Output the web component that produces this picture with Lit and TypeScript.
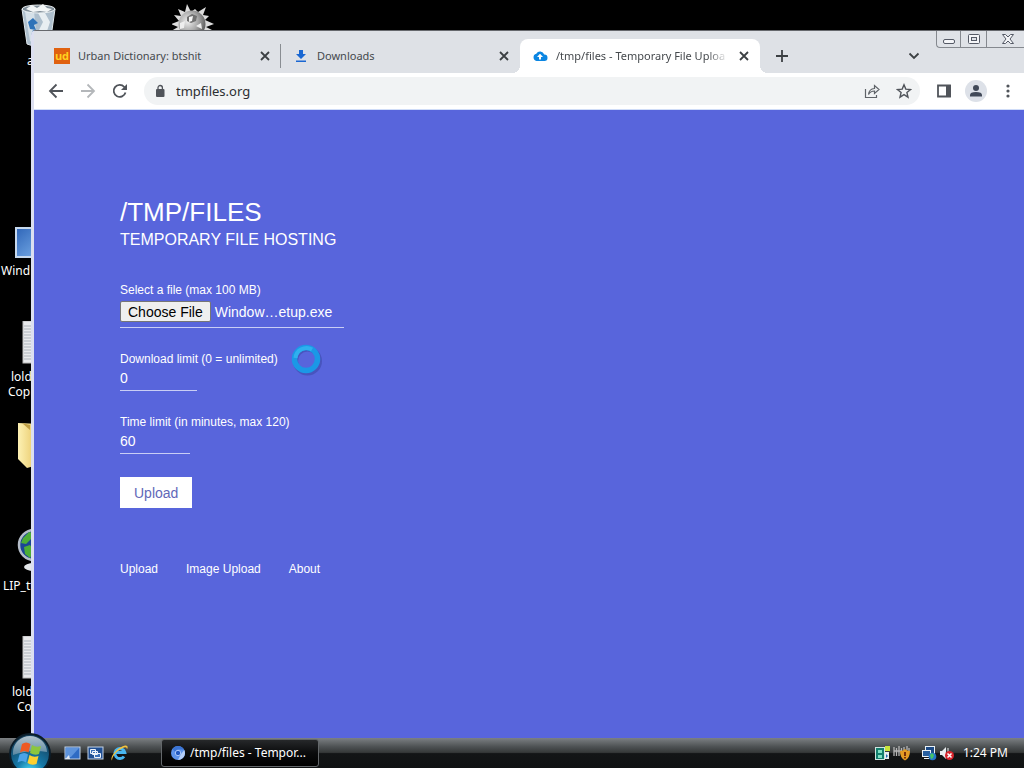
import { LitElement, html, css, svg } from "lit";
import { customElement } from "lit/decorators.js";

const page = svg`
  <rect x="5" y="0" width="26" height="42" fill="#e9eaec" stroke="#bbb"/>
  ${[5, 8, 11, 14, 17, 20, 23, 26, 29, 32, 35, 38].map((y) => svg`<path d="M6 ${y}h22" stroke="#aeb4bb"/>`)}
`;

const art: Record<string, unknown> = {
  bin: html`<svg width="36" height="44" viewBox="0 0 36 44">
    <path d="M1 5 6 40q12 5 23 0l5-35Z" fill="#aebfcd" stroke="#dfe7ec"/>
    <path d="M4 8 9 37q4 3 7 2L13 7Z" fill="#d5e0e8"/>
    <path d="m17 9 5 9-4 8 7 4 4-12-5-9Z" fill="#e8eef2"/>
    <path d="m7 18 5-4 5 5-4 2 2 5-6-1Zm3 13 2-5 5 3-2 5Z" fill="#2f73b8"/>
    <ellipse cx="17.500" cy="5" rx="16.500" ry="4" fill="#7f8d98" stroke="#eef3f5"/>
    <path d="m5 5 6-4 5 3 6-4 4 4 5 1-5 3-7-1-7 1Z" fill="#f3f6f7"/>
  </svg>`,
  mine: html`<svg width="42" height="42" viewBox="0 0 42 42">
    <defs><radialGradient id="mi" cx=".35" cy=".4" r=".75"><stop stop-color="#f0f0f0"/><stop offset=".5" stop-color="#a8a8a8"/><stop offset="1" stop-color="#4a4a4a"/></radialGradient></defs>
    <path d="m15 0 4 8 4-3 3 3 8-5-3 8 6 1-4 4 9 4-8 3 8 4-8 2 4 8-9-3-2 8-6-6-6 6-3-8-8 3 3-8-8-2 7-4-7-3 8-3-5-6 7 1-3-7 7 3Z" fill="#dcdcdc"/>
    <circle cx="20" cy="20" r="13.500" fill="url(#mi)"/>
    <path d="m15 13 5-3 5 2-1 5-5 2-4-2Z" fill="#707070"/><path d="m17 13 4-1-1 5-3 1Z" fill="#f4f4f4"/>
    <path d="m8 19 5-2-1 7-4 1Zm16 3 5-3 1 6Z" fill="#eee"/>
  </svg>`,
  screen: html`<svg width="34" height="32" viewBox="0 0 34 32">
    <defs><linearGradient id="sc" x2="1" y2="1"><stop stop-color="#2e65b8"/><stop offset="1" stop-color="#82b6ee"/></linearGradient></defs>
    <rect x="1" y="1" width="32" height="29" fill="url(#sc)" stroke="#c7d9ee" stroke-width="2"/>
  </svg>`,
  doc: html`<svg width="34" height="44" viewBox="0 0 34 44">${page}</svg>`,
  folder: html`<svg width="34" height="48" viewBox="0 0 34 48">
    <defs><linearGradient id="fo" x2="1"><stop stop-color="#fdf1b4"/><stop offset="1" stop-color="#e3be55"/></linearGradient></defs>
    <path d="M1 1 24 2v40L10 46 1 37Z" fill="url(#fo)"/><path d="m5 1 8 7V3Z" fill="#bf9f45"/>
  </svg>`,
  globe: html`<svg width="38" height="46" viewBox="0 0 38 46">
    <circle cx="19" cy="17" r="15" fill="#1b4596" stroke="#b5bdc8" stroke-width="2.500"/>
    <path d="m8 10 6-6 5 1-3 6-5 5-5-1Zm1 9 6-2 4 6-4 7-5-4Z" fill="#4cad37"/>
    <ellipse cx="19" cy="39" rx="10" ry="4" fill="#e4e7ea"/>
  </svg>`,
  ud: html`<svg width="16" height="16" viewBox="0 0 16 16"><rect width="16" height="16" fill="#e0610f"/>
    <text x="8" y="12" text-anchor="middle" font-family="Open Sans, sans-serif" font-weight="700" font-size="11" fill="#ffd21f">ud</text></svg>`,
  download: html`<svg width="16" height="16" viewBox="0 0 16 16"><path d="M6 2h4v4h3l-5 5-5-5h3ZM3 12.500h10v1.500H3Z" fill="#1a67d2"/></svg>`,
  cloud: html`<svg width="16" height="16" viewBox="0 0 16 16">
    <path d="M12.200 6.600A4.300 4.300 0 0 0 4.300 5.800 3.700 3.700 0 0 0 4.500 13h7.900a3.200 3.200 0 0 0-.2-6.400Z" fill="#0b86e2"/>
    <path d="M8 5.800 5 9h2v2.500h2V9h2Z" fill="#fff"/></svg>`,
  close: html`<svg width="16" height="16" viewBox="0 0 16 16"><path d="m4 4 8 8m0-8-8 8" stroke="#3c4043" stroke-width="1.800"/></svg>`,
  plus: html`<svg width="16" height="16" viewBox="0 0 16 16"><path d="M8 2v12M2 8h12" stroke="#3c4043" stroke-width="1.800"/></svg>`,
  chevron: html`<svg width="16" height="16" viewBox="0 0 16 16"><path d="m3.500 5.500 4.500 4.500 4.500-4.500" fill="none" stroke="#3c4043" stroke-width="1.800"/></svg>`,
  back: html`<svg width="16" height="16" viewBox="0 0 16 16"><path d="M15 8H2m6.500-6.500L2 8l6.500 6.500" fill="none" stroke="#50545a" stroke-width="1.800"/></svg>`,
  forward: html`<svg width="16" height="16" viewBox="0 0 16 16"><path d="M1 8h13M7.500 1.500 14 8l-6.500 6.500" fill="none" stroke="#b4b7ba" stroke-width="1.800"/></svg>`,
  reload: html`<svg width="16" height="16" viewBox="0 0 16 16"><path d="M13.500 9.500A6 6 0 1 1 12.300 4l1.200 1.300" fill="none" stroke="#50545a" stroke-width="1.800"/><path d="M15 1v6H9Z" fill="#50545a"/></svg>`,
  lock: html`<svg width="16" height="16" viewBox="0 0 16 16"><rect x="4" y="6" width="8.500" height="8" rx="1" fill="#50545a"/><path d="M6 6.500V4.700a2.200 2.200 0 0 1 4.400 0v1.800" fill="none" stroke="#50545a" stroke-width="1.300"/></svg>`,
  share: html`<svg width="16" height="16" viewBox="0 0 16 16"><path d="M1.500 6v8.500h11V12M4.500 11.500q.5-5.500 6-6V2.500L15 6.500l-4.500 4V8q-4 0-6 3.500Z" fill="none" stroke="#5f6368" stroke-width="1.200"/></svg>`,
  star: html`<svg width="16" height="16" viewBox="0 0 16 16"><path d="m8 1.800 1.800 4.300 4.700.4-3.600 3 1.100 4.700-4-2.500-4 2.500 1.100-4.700-3.600-3 4.700-.4Z" fill="none" stroke="#50545a" stroke-width="1.400"/></svg>`,
  panel: html`<svg width="16" height="16" viewBox="0 0 16 16"><path d="M2 2.500h12v11H2Z" fill="none" stroke="#50545a" stroke-width="1.800"/><path d="M10 2h5v12h-5Z" fill="#50545a"/></svg>`,
  person: html`<svg width="22" height="22" viewBox="0 0 22 22"><circle cx="11" cy="11" r="11" fill="#dde1e8"/><circle cx="11" cy="8" r="3" fill="#414958"/><path d="M5 16.500v-1.600q0-3 6-3t6 3v1.600Z" fill="#414958"/></svg>`,
  dots: html`<svg width="16" height="16" viewBox="0 0 16 16" fill="#50545a"><circle cx="8" cy="3" r="1.600"/><circle cx="8" cy="8" r="1.600"/><circle cx="8" cy="13" r="1.600"/></svg>`,
  minimize: html`<svg width="14" height="14" viewBox="0 0 14 14"><rect x="1.500" y="7.500" width="11" height="4" rx="1.500" fill="#f4f5f8" stroke="#555a66"/></svg>`,
  maximize: html`<svg width="14" height="14" viewBox="0 0 14 14"><rect x="1.500" y="2.500" width="11" height="9" rx="1" fill="#f4f5f8" stroke="#555a66"/><rect x="4.500" y="5.500" width="5" height="3" fill="#dfe2e8" stroke="#555a66"/></svg>`,
  shut: html`<svg width="14" height="14" viewBox="0 0 14 14"><path d="M1.500 2.500h3L7 5l2.500-2.500h3L9 7l3.500 4.500h-3L7 9l-2.500 2.500h-3L5 7Z" fill="#f4f5f8" stroke="#555a66"/></svg>`,
  start: html`<svg width="42" height="42" viewBox="0 0 42 42">
    <defs>
      <radialGradient id="st" cx=".5" cy=".95" r=".85"><stop stop-color="#4be0fb"/><stop offset=".4" stop-color="#1579a8"/><stop offset="1" stop-color="#15405c"/></radialGradient>
      <linearGradient id="gl" x2="0" y2="1"><stop stop-color="#e6eef3"/><stop offset="1" stop-color="#6f95ab"/></linearGradient>
    </defs>
    <circle cx="21" cy="21" r="20" fill="url(#st)" stroke="#0c1d29" stroke-width="2"/>
    <path d="M4 19a17 16 0 0 1 34 0q-17-3-34 3Z" fill="url(#gl)" opacity=".75"/>
    <path d="M13 11q4-3 8.500 0l-2 8.500q-4-3-8.500 0Z" fill="#ee5a24"/><path d="M23 12q4 3 9 1l-2 8q-4 2-9-1Z" fill="#8cc63e"/>
    <path d="M10.500 21.500q5-3 8.500 0l-2 8q-4-3-8.500 0Z" fill="#4ba3e8"/><path d="M20.500 22q4 3 9 1l-2 8q-5 2-9-1Z" fill="#fdd02f"/>
  </svg>`,
  desktop: html`<svg width="17" height="16" viewBox="0 0 17 16"><rect x="1" y="2" width="15" height="12" fill="#2f6bc4" stroke="#c4d3e6"/><path d="M2 3h13L7 12H2Z" fill="#5d93dc"/><path d="m1 14 4-4 1 4Z" fill="#dfe8f3"/></svg>`,
  switcher: html`<svg width="17" height="16" viewBox="0 0 17 16"><rect x="1" y="2" width="15" height="12" fill="#204f93" stroke="#c4d3e6"/><path d="M3.500 4.500h5v4h-5Zm2 2h5v3h-5Zm2 2h6v4h-6Z" fill="#3a6fb8" stroke="#eef3fa"/></svg>`,
  explorer: html`<svg width="19" height="18" viewBox="0 0 19 18"><path d="M14 12.500a5 5 0 1 1 .8-4H5" fill="none" stroke="#48b7f2" stroke-width="3"/><path d="M2 16.500C-1 13 8 3 15 1.500q4-.6 2 4 0-3-3-2C8 5.500 2 12 2 16.500Z" fill="#f5c33b"/></svg>`,
  chromium: html`<svg width="14" height="14" viewBox="0 0 14 14"><circle cx="7" cy="7" r="7" fill="#5d93ea"/><path d="M7 0a7 7 0 0 1 6 3.500H7A3.500 3.500 0 0 0 4 6L1.500 3A7 7 0 0 1 7 0Z" fill="#3b74d4"/><path d="M13.300 4A7 7 0 0 1 7 14l3-6Z" fill="#b5cff9"/><circle cx="7" cy="7" r="2.700" fill="#2259bf" stroke="#a9c6f7"/></svg>`,
  tray1: html`<svg width="16" height="16" viewBox="0 0 16 16"><rect x=".5" y="2.500" width="9" height="12" fill="#137f6d" stroke="#cfe5e0"/><path d="M3 5h4v3H3Zm0 5h4v3H3Z" fill="#7fe0c3"/><path d="M10 1h5v5h-5Z" fill="#c8e53a"/><path d="M10 7h4v7h-4Z" fill="#e6eef0"/><path d="m11 9 2 2-2 2Z" fill="#276eb4"/></svg>`,
  tray2: html`<svg width="18" height="16" viewBox="0 0 18 16"><path d="M1 2v9M3.500 3v8M6 1v10M8.500 3v6M11 2v3M14 1v4M16 3v3M1 6h7" stroke="#b5b5b5" stroke-width="1.300"/><path d="M12 4q2 2 5 2 0 7-5 9.500Q7 13 7 6q3 0 5-2Z" fill="#e69b24"/><path d="M12 7v4m0 1v1.500" stroke="#6d2408" stroke-width="1.800"/></svg>`,
  network: html`<svg width="16" height="16" viewBox="0 0 16 16"><rect x="4.500" y="1.500" width="9" height="7" fill="#1c4a86" stroke="#eaf1f6"/><rect x="1.500" y="5.500" width="8" height="6" fill="#275f9f" stroke="#eaf1f6"/><path d="M3 13.500h5" stroke="#eaf1f6"/><circle cx="11.500" cy="11.500" r="3.800" fill="#2478c9"/><path d="m9 10 2-2 2 2-1 3-2 1Z" fill="#45c466"/></svg>`,
  volume: html`<svg width="16" height="16" viewBox="0 0 16 16"><path d="M1 6h2l4-4v12l-4-4H1Z" fill="#e9edef"/><path d="M9 3v4" stroke="#e9edef"/><circle cx="10.500" cy="10.500" r="4.500" fill="#d8242c"/><path d="m8.500 8.500 4 4m0-4-4 4" stroke="#fff" stroke-width="1.500"/></svg>`,
};

@customElement("desktop-icons")
class DesktopIcons extends LitElement {
  static styles = css`
    :host { display: block; }
    .art, .label { position: absolute; }
    .label { color: #fff; font: 12px/15px "Noto Sans", sans-serif; white-space: nowrap; }
    svg { display: block; }
  `;
  icons = [
    { x: 21, y: 4, art: "bin" },
    { x: 172, y: 4, art: "mine" },
    { x: 15, y: 227, art: "screen" },
    { x: 18, y: 321, art: "doc" },
    { x: 17, y: 422, art: "folder" },
    { x: 15, y: 528, art: "globe" },
    { x: 18, y: 636, art: "doc" },
  ];
  labels = [
    { x: 27, y: 53, text: "a" },
    { x: 1, y: 263, text: "Wind" },
    { x: 11, y: 369, text: "lold" },
    { x: 8, y: 384, text: "Cop" },
    { x: 3, y: 578, text: "LIP_tt" },
    { x: 12, y: 684, text: "lold" },
    { x: 17, y: 699, text: "Co" },
  ];
  render() {
    return html`
      ${this.icons.map((i) => html`<div class="art" style="left:${i.x}px;top:${i.y}px">${art[i.art]}</div>`)}
      ${this.labels.map((l) => html`<span class="label" style="left:${l.x}px;top:${l.y}px">${l.text}</span>`)}`;
  }
}

@customElement("browser-tabs")
class BrowserTabs extends LitElement {
  static styles = css`
    :host { display: flex; align-items: stretch; height: 42px; padding: 8px 8px 0; box-sizing: border-box; background: #dee1e6; color: #45494d; font: 11px/16px "Noto Sans", sans-serif; }
    .tab { position: relative; display: flex; align-items: center; gap: 8px; flex: 0 1 239px; box-sizing: border-box; padding: 0 8px 0 12px; min-width: 0; }
    .tab.divided { border-right: 1px solid #898d92; border-image: linear-gradient(transparent 18%, #898d92 18% 82%, transparent 82%) 1; padding-right: 7px; }
    .tab.active { flex-basis: 240px; background: #fff; border-radius: 8px 8px 0 0; }
    .tab.active::before, .tab.active::after { content: ""; position: absolute; bottom: 0; width: 8px; height: 8px; }
    .tab.active::before { left: -8px; background: radial-gradient(circle at 0 0, transparent 8px, #fff 8px); }
    .tab.active::after { right: -8px; background: radial-gradient(circle at 100% 0, transparent 8px, #fff 8px); }
    .title { flex: 1; overflow: hidden; white-space: nowrap; }
    .tab.active .title { mask-image: linear-gradient(90deg, #000 88%, transparent); }
    button { display: grid; place-items: center; padding: 0; border: 0; background: none; }
    .add { margin-left: 14px; }
    .search { margin: 0 94px 0 auto; }
    svg { display: block; flex: none; }
  `;
  tabs = [
    { art: "ud", title: "Urban Dictionary: btshit", cls: "divided" },
    { art: "download", title: "Downloads", cls: "" },
    { art: "cloud", title: "/tmp/files - Temporary File Uploa", cls: "active" },
  ];
  render() {
    return html`${this.tabs.map((t) => html`<div class="tab ${t.cls}">${art[t.art]}<span class="title">${t.title}</span><button aria-label="Close tab">${art.close}</button></div>`)}
      <button class="add" aria-label="New tab">${art.plus}</button>
      <button class="search" aria-label="Search tabs">${art.chevron}</button>`;
  }
}

@customElement("browser-toolbar")
class BrowserToolbar extends LitElement {
  static styles = css`
    :host { display: flex; align-items: center; height: 37px; padding-left: 6px; box-sizing: border-box; background: #fff; border-bottom: 1px solid #cfdcf8; }
    button { display: grid; place-items: center; width: 32px; height: 28px; padding: 0; border: 0; background: none; flex: none; }
    .address { display: flex; align-items: center; flex: 1; height: 28px; margin: 0 8px; padding-left: 8px; border-radius: 14px; background: #f1f3f4; }
    input { flex: 1; min-width: 0; margin-left: 8px; padding: 0; border: 0; outline: 0; background: none; color: #2b2e31; font: 13px/20px "Noto Sans", sans-serif; }
    svg { display: block; flex: none; }
  `;
  render() {
    return html`
      <button aria-label="Back">${art.back}</button>
      <button aria-label="Forward">${art.forward}</button>
      <button aria-label="Reload">${art.reload}</button>
      <div class="address">${art.lock}<input aria-label="Address" value="tmpfiles.org" />
        <button aria-label="Share">${art.share}</button><button aria-label="Bookmark">${art.star}</button></div>
      <button aria-label="Side panel">${art.panel}</button>
      <button aria-label="Profile">${art.person}</button>
      <button aria-label="Menu">${art.dots}</button>`;
  }
}

@customElement("upload-page")
class UploadPage extends LitElement {
  static styles = css`
    :host { display: block; padding: 86px; background: #5865dc; color: #fff; font: 12px/16px "Liberation Sans", Arial, sans-serif; box-sizing: border-box; }
    h1 { margin: 0; font-size: 26px; line-height: 32px; font-weight: 400; }
    h2 { margin: 0 0 30px; font-size: 16px; line-height: 24px; font-weight: 400; }
    form { display: flex; flex-direction: column; align-items: flex-start; gap: 23px; }
    .field { display: flex; flex-direction: column; align-items: flex-start; }
    input { box-sizing: border-box; margin: 0; padding: 3px 0 4px; border: 0; border-bottom: 1px solid #c9cef5; border-radius: 0; outline: 0; background: none; color: #fff; font: 14px/16px "Liberation Sans", Arial, sans-serif; }
    input[type="number"] { appearance: textfield; height: 24px; }
    .file { width: 224px; height: 30px; padding-bottom: 5px; }
    .file::file-selector-button { box-sizing: border-box; height: 21px; margin: 0 4px 0 0; padding: 0 7px; border: 1px solid #767676; border-radius: 2px; background: #efefef; color: #000; font: inherit; }
    .downloads { width: 77px; }
    .minutes { width: 70px; }
    .submit { height: 31px; margin: 0; padding: 0 14px; border: 0; background: #fff; color: #6268b8; font: 14px/16px "Liberation Sans", Arial, sans-serif; }
    nav { display: flex; gap: 28px; margin-top: 53px; }
    a { color: #fff; text-decoration: none; }
  `;
  firstUpdated() {
    const picked = new DataTransfer();
    picked.items.add(new File([""], "Window…etup.exe"));
    this.renderRoot.querySelector<HTMLInputElement>(".file")!.files = picked.files;
  }
  render() {
    return html`
      <h1>/TMP/FILES</h1>
      <h2>TEMPORARY FILE HOSTING</h2>
      <form>
        <div class="field"><label for="file">Select a file (max 100 MB)</label><input class="file" id="file" type="file" /></div>
        <div class="field"><label for="downloads">Download limit (0 = unlimited)</label><input class="downloads" id="downloads" type="number" value="0" /></div>
        <div class="field"><label for="minutes">Time limit (in minutes, max 120)</label><input class="minutes" id="minutes" type="number" value="60" /></div>
        <button class="submit" type="button">Upload</button>
      </form>
      <nav><a href="#upload">Upload</a><a href="#image">Image Upload</a><a href="#about">About</a></nav>`;
  }
}

@customElement("task-bar")
class TaskBar extends LitElement {
  static styles = css`
    :host { position: relative; display: flex; align-items: center; height: 30px; padding: 0 16px 0 64px; box-sizing: border-box; background: linear-gradient(#7c8083, #4c5052 30%, #363939 48%, #131516 52%, #101213); color: #fff; font: 12px/16px "Noto Sans", sans-serif; }
    button { display: flex; align-items: center; padding: 0; border: 0; background: none; color: inherit; font: inherit; }
    .start { position: absolute; left: 9px; top: -5px; z-index: 2; }
    .quick { display: flex; align-items: center; gap: 6px; }
    .task { gap: 5px; width: 158px; height: 28px; margin-left: 32px; padding: 0 9px; box-sizing: border-box; border: 1px solid #63676a; border-radius: 3px; background: linear-gradient(#26282a, #0a0b0c 50%, #000); }
    .task span { white-space: nowrap; }
    .tray { display: flex; align-items: center; gap: 2px; margin-left: auto; }
    .net { margin-left: 8px; }
    time { margin-left: 6px; }
    svg { display: block; flex: none; }
  `;
  render() {
    return html`
      <button class="start" aria-label="Start">${art.start}</button>
      <div class="quick">
        <button aria-label="Show desktop">${art.desktop}</button>
        <button aria-label="Switch windows">${art.switcher}</button>
        <button aria-label="Internet Explorer">${art.explorer}</button>
      </div>
      <button class="task">${art.chromium}<span>/tmp/files - Tempor...</span></button>
      <div class="tray">${art.tray1}${art.tray2}<span class="net">${art.network}</span>${art.volume}<time>1:24 PM</time></div>`;
  }
}

@customElement("app-root")
class AppRoot extends LitElement {
  static styles = css`
    :host { display: flex; flex-direction: column; height: 100vh; overflow: hidden; background: #000; }
    .desktop { position: relative; flex: 1; min-height: 0; }
    .window { position: absolute; left: 31px; right: 0; top: 30px; bottom: 0; display: flex; flex-direction: column; overflow: hidden; box-sizing: border-box; border-left: 3px solid #dcdff0; border-top: 1px solid #66686d; border-top-left-radius: 5px; background: #dee1e6; }
    .controls { position: absolute; right: 0; top: 0; display: grid; grid-template-columns: 24px 26px 37px; height: 16px; border: 1px solid #85898f; border-width: 0 0 1px 1px; border-bottom-left-radius: 4px; background: #dfe2e7; }
    .controls button { display: grid; place-items: center; padding: 0; border: 0; border-right: 1px solid #85898f; background: none; }
    .controls button:last-child { border-right: 0; padding-left: 4px; }
    .controls svg { display: block; }
    upload-page { flex: 1; }
    .busy { position: absolute; left: 290px; top: 343px; }
  `;
  render() {
    return html`
      <div class="desktop">
        <desktop-icons></desktop-icons>
        <div class="window">
          <browser-tabs></browser-tabs>
          <browser-toolbar></browser-toolbar>
          <upload-page></upload-page>
          <div class="controls">
            <button aria-label="Minimize">${art.minimize}</button>
            <button aria-label="Maximize">${art.maximize}</button>
            <button aria-label="Close">${art.shut}</button>
          </div>
        </div>
        <svg class="busy" width="34" height="34" viewBox="0 0 34 34">
          <circle cx="17.500" cy="18" r="12" fill="none" stroke="#3843a0" stroke-width="5" opacity=".5"/>
          <circle cx="16" cy="16" r="11.500" fill="none" stroke="#1b98e6" stroke-width="5.500"/>
          <path d="M5.500 15A11 11 0 0 1 22 6.500" fill="none" stroke="#2fb0ee" stroke-width="4"/>
        </svg>
      </div>
      <task-bar></task-bar>`;
  }
}
